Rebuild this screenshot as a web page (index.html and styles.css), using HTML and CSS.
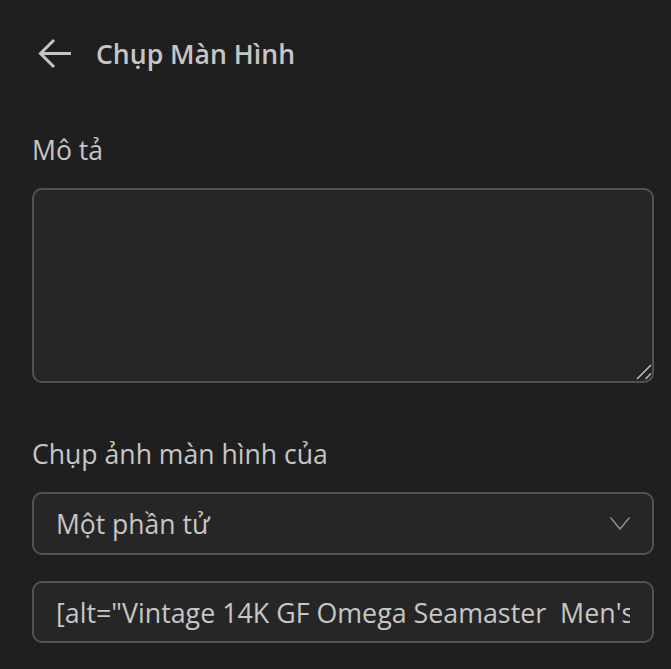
FILE: index.html
```html
<!DOCTYPE html>
<html lang="vi">
<head>
    <meta charset="UTF-8">
    <meta name="viewport" content="width=device-width, initial-scale=1.0">
    <title>Chụp Màn Hình</title>
    <link rel="stylesheet" href="styles.css">
</head>
<body>
    <div class="header">
        <a href="javascript:void(0)" class="backbtn" title="Quay lại">
            <svg width="34" height="32" viewBox="0 0 34 32">
                <path d="M33 15.5H3 M16 2L2.5 15.5L16 29" fill="none" stroke="#c5c5c5" stroke-width="3"/>
            </svg>
        </a>
        <span class="title">Chụp Màn Hình</span>
    </div>

    <div class="form-group">
        <label class="label" for="desc">Mô tả</label>
        <div class="desc-wrap">
            <textarea id="desc" class="desc"></textarea>
            
            <svg class="grip" width="18" height="18" viewBox="0 0 18 18">
                <path d="M2 16L16 2 M10.5 16L16 10.5" fill="none" stroke="#111" stroke-width="3.6"/>
                <path d="M2 16L16 2 M10.5 16L16 10.5" fill="none" stroke="#a8a8a8" stroke-width="1.8"/>
            </svg>
        </div>
    </div>

    <div class="form-group">
        <label class="label second" for="target">Chụp ảnh màn hình của</label>
        <div class="select-wrap">
            <select id="target" class="select">
                <option>Một phần tử</option>
                <option>Toàn trang</option>
                <option>Vùng hiển thị</option>
            </select>
            <svg class="chevron" width="22" height="15" viewBox="0 0 22 15">
                <path d="M1.5 1.5L11 13L20.5 1.5" fill="none" stroke="#8a8a8a" stroke-width="1.6"/>
            </svg>
        </div>
        <input type="text" class="field" value="[alt=&quot;Vintage 14K GF Omega Seamaster  Men's Automatic Watch&quot;]">
    </div>
</body>
</html>
```

FILE: styles.css
```css
body
{
    margin: 0;
    padding: 0 17px 0 32px;
    background: #1f1f1f;
    color: #c6c6c6;
    font-family: "Open Sans", "Noto Sans", sans-serif;
    color-scheme: dark;
}
.header
{
    display: flex;
    align-items: center;
    height: 108px;
}
.backbtn
{
    display: flex;
    margin-left: 6px;
    margin-right: 24px;
}
.title
{
    font-size: 26.6px;
    font-weight: 600;
    color: #c6c6c6;
}
.form-group
{
    display: flex;
    flex-direction: column;
}
.label
{
    font-size: 26.6px;
    line-height: 36px;
    margin-top: 24px;
    margin-bottom: 20px;
}
.label.second
{
    margin-top: 53px;
}
.desc-wrap
{
    position: relative;
    display: flex;
}
.desc
{
    flex: 1;
    height: 195px;
    box-sizing: border-box;
    background: #262626;
    border: solid 2px #525252;
    border-radius: 10px;
    resize: none;
    color: #c6c6c6;
    font-family: inherit;
    font-size: 26px;
    padding: 10px 22px;
    outline: none;
}
.grip
{
    position: absolute;
    right: 1px;
    bottom: 2px;
    pointer-events: none;
}
.select-wrap
{
    position: relative;
}
.select
{
    width: 100%;
    height: 63px;
    appearance: none;
    background: #262626;
    border: solid 2px #525252;
    border-radius: 10px;
    color: #c6c6c6;
    font-family: inherit;
    font-size: 26.5px;
    padding: 0 60px 0 22px;
    outline: none;
}
.chevron
{
    position: absolute;
    right: 23px;
    top: 24px;
    pointer-events: none;
}
.field
{
    margin-top: 26px;
    height: 62px;
    box-sizing: border-box;
    background: #262626;
    border: solid 2px #525252;
    border-radius: 10px;
    color: #c6c6c6;
    font-family: inherit;
    font-size: 26.8px;
    padding: 0 22px;
    outline: none;
}
```
